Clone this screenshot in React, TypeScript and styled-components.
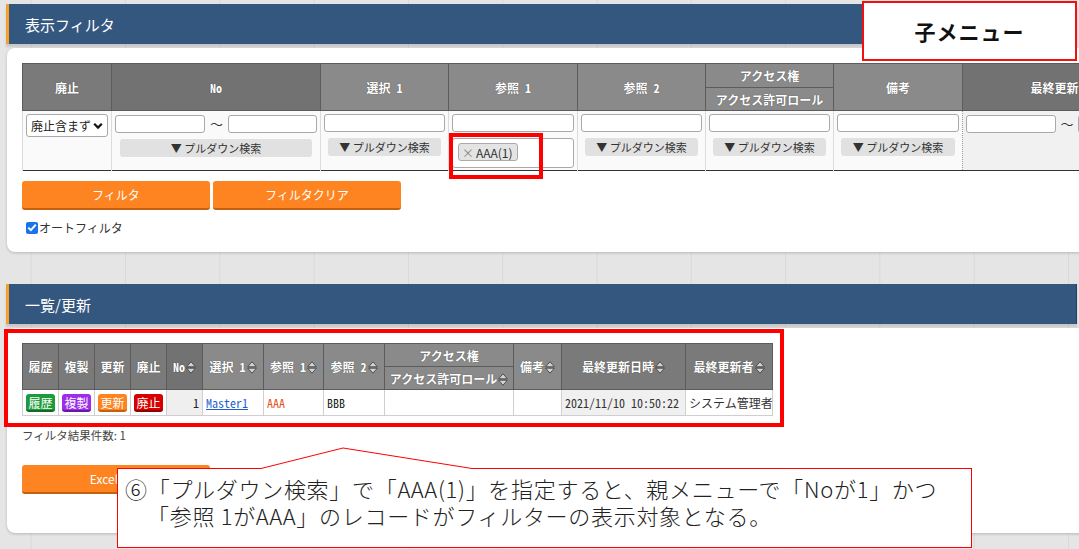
import React from 'react';
import styled, { createGlobalStyle } from 'styled-components';

const GlobalStyle = createGlobalStyle`
  html, body { margin: 0; padding: 0; overflow: hidden; height: 100%; }
  body {
    background-color: #e5e5e5;
    background-image: linear-gradient(to right, #d9d9d9 1px, transparent 1px);
    background-size: 94.3px 100%;
    background-position: 125px 0;
    font-family: "Noto Sans CJK JP", "Noto Sans", sans-serif;
    color: #333;
  }
`;

const MONO = `"Noto Sans Mono CJK JP", "Liberation Mono", "Noto Sans CJK JP", monospace`;

const Page = styled.div`
  position: relative;
  width: 1079px;
  height: 549px;
  padding-top: 4px;
  box-sizing: border-box;
  overflow: hidden;
`;

const SectionHeader = styled.div<{ $top?: number }>`
  margin: ${(p) => p.$top ?? 0}px 0 0 6px;
  width: 1071px;
  height: 40px;
  box-sizing: border-box;
  background: #34577f;
  border-left: 3px solid #f5a02c;
  border-right: 1px solid #24415f;
  color: #fff;
  font-size: 15px;
  padding-left: 16px;
  display: flex;
  align-items: center;
  box-shadow: 0 3px 2px rgba(0, 0, 0, 0.13);
`;

const Card = styled.div<{ $h: number }>`
  position: relative;
  margin: 4px 0 0 7px;
  width: 1200px;
  height: ${(p) => p.$h}px;
  box-sizing: border-box;
  padding: 15px 0 0 15px;
  background: #fff;
  border-radius: 8px 0 0 8px;
  box-shadow: 0 1px 3px rgba(0, 0, 0, 0.2);
`;

const Table = styled.table<{ $w: number }>`
  border-collapse: collapse;
  table-layout: fixed;
  width: ${(p) => p.$w}px;
  border: 1px solid #333;
  font-size: 12px;
`;

const Col = styled.col<{ $w: number }>`
  width: ${(p) => p.$w}px;
`;

const Row = styled.tr<{ $h: number }>`
  height: ${(p) => p.$h}px;
`;

const Th = styled.th<{ $bg: string }>`
  background: ${(p) => p.$bg};
  color: #fff;
  font-weight: bold;
  font-size: 12px;
  text-align: center;
  padding: 0;
  border: 1px solid #5c5c5c;
  text-shadow: 0 0 1px rgba(0, 0, 0, 0.55);
  white-space: nowrap;
  overflow: hidden;
`;

const Mono = styled.span`
  font-family: ${MONO};
  white-space: pre;
`;

const FilterTd = styled.td<{ $shade?: boolean }>`
  background: ${(p) => (p.$shade ? '#f1f1f1' : '#fafafa')};
  vertical-align: top;
  padding: 3px 3px 0;
  border-left: 1px ${(p) => (p.$shade ? 'dotted #999' : 'solid #dcdcdc')};
  border-top: 1px dotted #333;
`;

const TextInput = styled.input<{ $w?: number }>`
  display: block;
  width: ${(p) => (p.$w ? `${p.$w}px` : '100%')};
  height: 18px;
  box-sizing: border-box;
  margin: 0;
  padding: 0 3px;
  border: 1px solid #a9a9a9;
  border-radius: 3px;
  background: #fff;
  font-size: 12px;
  flex: none;
`;

const RangeRow = styled.div`
  display: flex;
  align-items: center;
`;

const Tilde = styled.span<{ $w: number }>`
  width: ${(p) => p.$w}px;
  text-align: center;
  font-size: 13px;
  color: #333;
  flex: none;
`;

const PullBtn = styled.div<{ $mx: number }>`
  margin: 6px ${(p) => p.$mx}px 0;
  height: 18px;
  background: #e1e1e1;
  border-radius: 3px;
  font-size: 11px;
  color: #333;
  display: flex;
  align-items: center;
  justify-content: center;
  white-space: nowrap;
`;

const FakeSelect = styled.div`
  height: 23px;
  box-sizing: border-box;
  border: 1px solid #a9a9a9;
  border-radius: 3px;
  background: #fff;
  display: flex;
  align-items: center;
  justify-content: space-between;
  padding: 0 4px 0 4px;
  font-size: 12px;
  color: #222;
  white-space: nowrap;
`;

const Chevron = styled.svg`
  width: 10px;
  height: 8px;
  flex: none;
`;

const TagBox = styled.div`
  margin-top: 6px;
  height: 30px;
  box-sizing: border-box;
  border: 1px solid #aaa;
  border-radius: 3px;
  background: #fff;
  padding: 4px 5px;
`;

const Tag = styled.span`
  display: inline-flex;
  align-items: center;
  height: 18px;
  box-sizing: border-box;
  padding: 0 4px 0 3px;
  background: #e4e4e4;
  border: 1px solid #aaa;
  border-radius: 3px;
  font-size: 12px;
  color: #333;
`;

const TagX = styled.span`
  color: #888;
  margin-right: 2px;
`;

const ButtonRow = styled.div<{ $mt: number }>`
  display: flex;
  gap: 3px;
  margin-top: ${(p) => p.$mt}px;
`;

const OrangeBtn = styled.div`
  width: 188px;
  height: 29px;
  box-sizing: border-box;
  background: #fd8421;
  border-bottom: 2px solid #c7600c;
  border-radius: 3px;
  color: #fff;
  font-size: 12px;
  display: flex;
  align-items: center;
  justify-content: center;
`;

const CheckRow = styled.label`
  display: flex;
  align-items: center;
  gap: 1px;
  margin: 9px 0 0 4px;
  font-size: 12px;
  color: #333;
`;

const CheckBox = styled.span`
  width: 12px;
  height: 12px;
  border-radius: 2px;
  background: #1a73e8;
  display: inline-flex;
  align-items: center;
  justify-content: center;
`;

const ListTd = styled.td<{ $bg?: string; $align?: string; $dotted?: boolean }>`
  background: ${(p) => p.$bg ?? '#fff'};
  text-align: ${(p) => p.$align ?? 'left'};
  border: 1px solid #cfcfcf;
  border-top: 1px dotted #333;
  ${(p) => (p.$dotted ? 'border-left: 1px dotted #888;' : '')}
  padding: 0 3px;
  font-size: 12px;
  white-space: nowrap;
  overflow: hidden;
`;

const ActBtn = styled.span<{ $bg: string; $bd: string }>`
  display: inline-flex;
  align-items: center;
  justify-content: center;
  width: 29px;
  height: 18px;
  box-sizing: border-box;
  background: ${(p) => p.$bg};
  border-bottom: 2px solid ${(p) => p.$bd};
  border-radius: 3px;
  color: #fff;
  font-size: 12px;
  vertical-align: middle;
`;

const MonoText = styled.span<{ $color: string; $link?: boolean }>`
  font-family: ${MONO};
  font-size: 12px;
  color: ${(p) => p.$color};
  text-decoration: ${(p) => (p.$link ? 'underline' : 'none')};
`;

const ResultText = styled.div`
  margin-top: 11px;
  font-size: 11.5px;
  line-height: 16px;
  color: #444;
`;

const SortSvg = styled.svg`
  width: 10px;
  height: 13px;
  margin-left: 1px;
  vertical-align: -2px;
`;

const SortIcon = () => (
  <SortSvg viewBox="0 0 10 13">
    <path d="M5 0.8 L9.3 5.8 H0.7 Z" fill="#d4d4d4" stroke="#454545" strokeWidth="0.9" />
    <path d="M0.7 7.2 H9.3 L5 12.2 Z" fill="#d4d4d4" stroke="#454545" strokeWidth="0.9" />
  </SortSvg>
);

const RedFrame = styled.div<{ $w: number; $h: number; $b: number }>`
  position: absolute;
  width: ${(p) => p.$w}px;
  height: ${(p) => p.$h}px;
  box-sizing: border-box;
  border: ${(p) => p.$b}px solid #ff0000;
  pointer-events: none;
`;

const FilterMark = styled(RedFrame)`
  left: 449px;
  top: 133px;
`;

const ListMark = styled(RedFrame)`
  left: 4px;
  top: 329px;
`;

const ChildMenu = styled.div`
  position: absolute;
  left: 862px;
  top: 1px;
  width: 215px;
  height: 60px;
  box-sizing: border-box;
  border: 2px solid #f01010;
  background: #fff;
  display: flex;
  align-items: center;
  justify-content: center;
  font-size: 21px;
  font-weight: bold;
  color: #111;
  letter-spacing: 1px;
`;

const Callout = styled.div`
  position: absolute;
  left: 117px;
  top: 468px;
  width: 855px;
  height: 80px;
  box-sizing: border-box;
  border: 1px solid #ff0000;
  background: #fff;
  padding: 6px 0 0 7px;
  font-size: 22px;
  font-weight: 300;
  line-height: 27px;
  letter-spacing: 0.7px;
  color: #222;
  white-space: nowrap;
`;

const CalloutLine = styled.div<{ $indent?: boolean }>`
  padding-left: ${(p) => (p.$indent ? '1em' : '0')};
`;

const Pointer = styled.svg`
  position: absolute;
  left: 260px;
  top: 447px;
  width: 214px;
  height: 23px;
`;

const filterCols = [89, 209, 128, 129, 128, 128, 129, 208];
const listCols = [36, 36, 36, 36, 36, 61, 60, 61, 129, 48, 124, 87];

const HEAD = '#7a7a7a';
const HEAD_DARK = '#727272';
const HEAD_LIGHT = '#8a8a8a';

const Pull = ({ mx }: { mx: number }) => <PullBtn $mx={mx}>▼ プルダウン検索</PullBtn>;

export default function App() {
  return (
    <>
      <GlobalStyle />
      <Page>
        <SectionHeader>表示フィルタ</SectionHeader>
        <Card $h={204}>
          <Table $w={1148}>
            <colgroup>
              {filterCols.map((w, i) => (
                <Col key={i} $w={w} />
              ))}
            </colgroup>
            <tbody>
              <Row $h={24}>
                <Th $bg={HEAD} rowSpan={2}>廃止</Th>
                <Th $bg={HEAD_DARK} rowSpan={2}><Mono>No</Mono></Th>
                <Th $bg={HEAD_LIGHT} rowSpan={2}>選択<Mono> 1</Mono></Th>
                <Th $bg={HEAD_LIGHT} rowSpan={2}>参照<Mono> 1</Mono></Th>
                <Th $bg={HEAD_LIGHT} rowSpan={2}>参照<Mono> 2</Mono></Th>
                <Th $bg={HEAD_LIGHT}>アクセス権</Th>
                <Th $bg={HEAD_LIGHT} rowSpan={2}>備考</Th>
                <Th $bg={HEAD_DARK} rowSpan={2}>最終更新日時</Th>
              </Row>
              <Row $h={23}>
                <Th $bg={HEAD_LIGHT}>アクセス許可ロール</Th>
              </Row>
              <Row $h={60}>
                <FilterTd>
                  <FakeSelect>
                    廃止含まず
                    <Chevron viewBox="0 0 10 8">
                      <path d="M1.2 1.8 L5 5.6 L8.8 1.8" fill="none" stroke="#111" strokeWidth="2.2" />
                    </Chevron>
                  </FakeSelect>
                </FilterTd>
                <FilterTd>
                  <RangeRow>
                    <TextInput $w={90} />
                    <Tilde $w={23}>〜</Tilde>
                    <TextInput $w={89} />
                  </RangeRow>
                  <Pull mx={5} />
                </FilterTd>
                <FilterTd>
                  <TextInput />
                  <Pull mx={4} />
                </FilterTd>
                <FilterTd>
                  <TextInput />
                  <TagBox>
                    <Tag><TagX>×</TagX>AAA(1)</Tag>
                  </TagBox>
                </FilterTd>
                <FilterTd>
                  <TextInput />
                  <Pull mx={4} />
                </FilterTd>
                <FilterTd>
                  <TextInput />
                  <Pull mx={4} />
                </FilterTd>
                <FilterTd>
                  <TextInput />
                  <Pull mx={4} />
                </FilterTd>
                <FilterTd $shade>
                  <RangeRow>
                    <TextInput $w={90} />
                    <Tilde $w={22}>〜</Tilde>
                    <TextInput $w={89} />
                  </RangeRow>
                </FilterTd>
              </Row>
            </tbody>
          </Table>
          <ButtonRow $mt={10}>
            <OrangeBtn>フィルタ</OrangeBtn>
            <OrangeBtn>フィルタクリア</OrangeBtn>
          </ButtonRow>
          <CheckRow>
            <CheckBox>
              <svg width="10" height="9" viewBox="0 0 10 9">
                <path d="M1.3 4.6 L3.9 7.1 L8.8 1.6" fill="none" stroke="#fff" strokeWidth="2" />
              </svg>
            </CheckBox>
            オートフィルタ
          </CheckRow>
        </Card>

        <SectionHeader $top={32}>一覧/更新</SectionHeader>
        <Card $h={205}>
          <Table $w={750}>
            <colgroup>
              {listCols.map((w, i) => (
                <Col key={i} $w={w} />
              ))}
            </colgroup>
            <tbody>
              <Row $h={23}>
                <Th $bg={HEAD} rowSpan={2}>履歴</Th>
                <Th $bg={HEAD} rowSpan={2}>複製</Th>
                <Th $bg={HEAD} rowSpan={2}>更新</Th>
                <Th $bg={HEAD} rowSpan={2}>廃止</Th>
                <Th $bg={HEAD_DARK} rowSpan={2}><Mono>No</Mono><SortIcon /></Th>
                <Th $bg={HEAD_LIGHT} rowSpan={2}>選択<Mono> 1</Mono><SortIcon /></Th>
                <Th $bg={HEAD_LIGHT} rowSpan={2}>参照<Mono> 1</Mono><SortIcon /></Th>
                <Th $bg={HEAD_LIGHT} rowSpan={2}>参照<Mono> 2</Mono><SortIcon /></Th>
                <Th $bg={HEAD_LIGHT}>アクセス権</Th>
                <Th $bg={HEAD_LIGHT} rowSpan={2}>備考<SortIcon /></Th>
                <Th $bg={HEAD} rowSpan={2}>最終更新日時<SortIcon /></Th>
                <Th $bg={HEAD} rowSpan={2}>最終更新者<SortIcon /></Th>
              </Row>
              <Row $h={23}>
                <Th $bg={HEAD_LIGHT}>アクセス許可ロール<SortIcon /></Th>
              </Row>
              <Row $h={26}>
                <ListTd $align="center"><ActBtn $bg="#1e9b3c" $bd="#136b27">履歴</ActBtn></ListTd>
                <ListTd $align="center"><ActBtn $bg="#9b2ee8" $bd="#6a17a8">複製</ActBtn></ListTd>
                <ListTd $align="center"><ActBtn $bg="#fd8421" $bd="#c7600c">更新</ActBtn></ListTd>
                <ListTd $align="center"><ActBtn $bg="#d60000" $bd="#930000">廃止</ActBtn></ListTd>
                <ListTd $bg="#efefef" $align="right"><MonoText $color="#222">1</MonoText></ListTd>
                <ListTd><MonoText $color="#1d5fd1" $link>Master1</MonoText></ListTd>
                <ListTd><MonoText $color="#e2561b">AAA</MonoText></ListTd>
                <ListTd><MonoText $color="#222">BBB</MonoText></ListTd>
                <ListTd />
                <ListTd />
                <ListTd $bg="#f0f0f0" $dotted><MonoText $color="#333">2021/11/10 10:50:22</MonoText></ListTd>
                <ListTd>システム管理者</ListTd>
              </Row>
            </tbody>
          </Table>
          <ResultText>フィルタ結果件数: 1</ResultText>
          <ButtonRow $mt={22}>
            <OrangeBtn>Excel出力</OrangeBtn>
          </ButtonRow>
        </Card>

        <ChildMenu>子メニュー</ChildMenu>
        <FilterMark $w={94} $h={46} $b={4} />
        <ListMark $w={780} $h={98} $b={4} />

        <Callout>
          <CalloutLine>⑥「プルダウン検索」で「AAA(1)」を指定すると、親メニューで「Noが1」かつ</CalloutLine>
          <CalloutLine $indent>「参照 1がAAA」のレコードがフィルターの表示対象となる。</CalloutLine>
        </Callout>
        <Pointer viewBox="0 0 214 23">
          <polygon points="1,21 83,1 212,21" fill="#fff" />
          <rect x="1.5" y="20.5" width="210" height="2.5" fill="#fff" />
          <polyline points="1,21.5 83,1 212,21.5" fill="none" stroke="#ff0000" strokeWidth="1" />
        </Pointer>
      </Page>
    </>
  );
}
